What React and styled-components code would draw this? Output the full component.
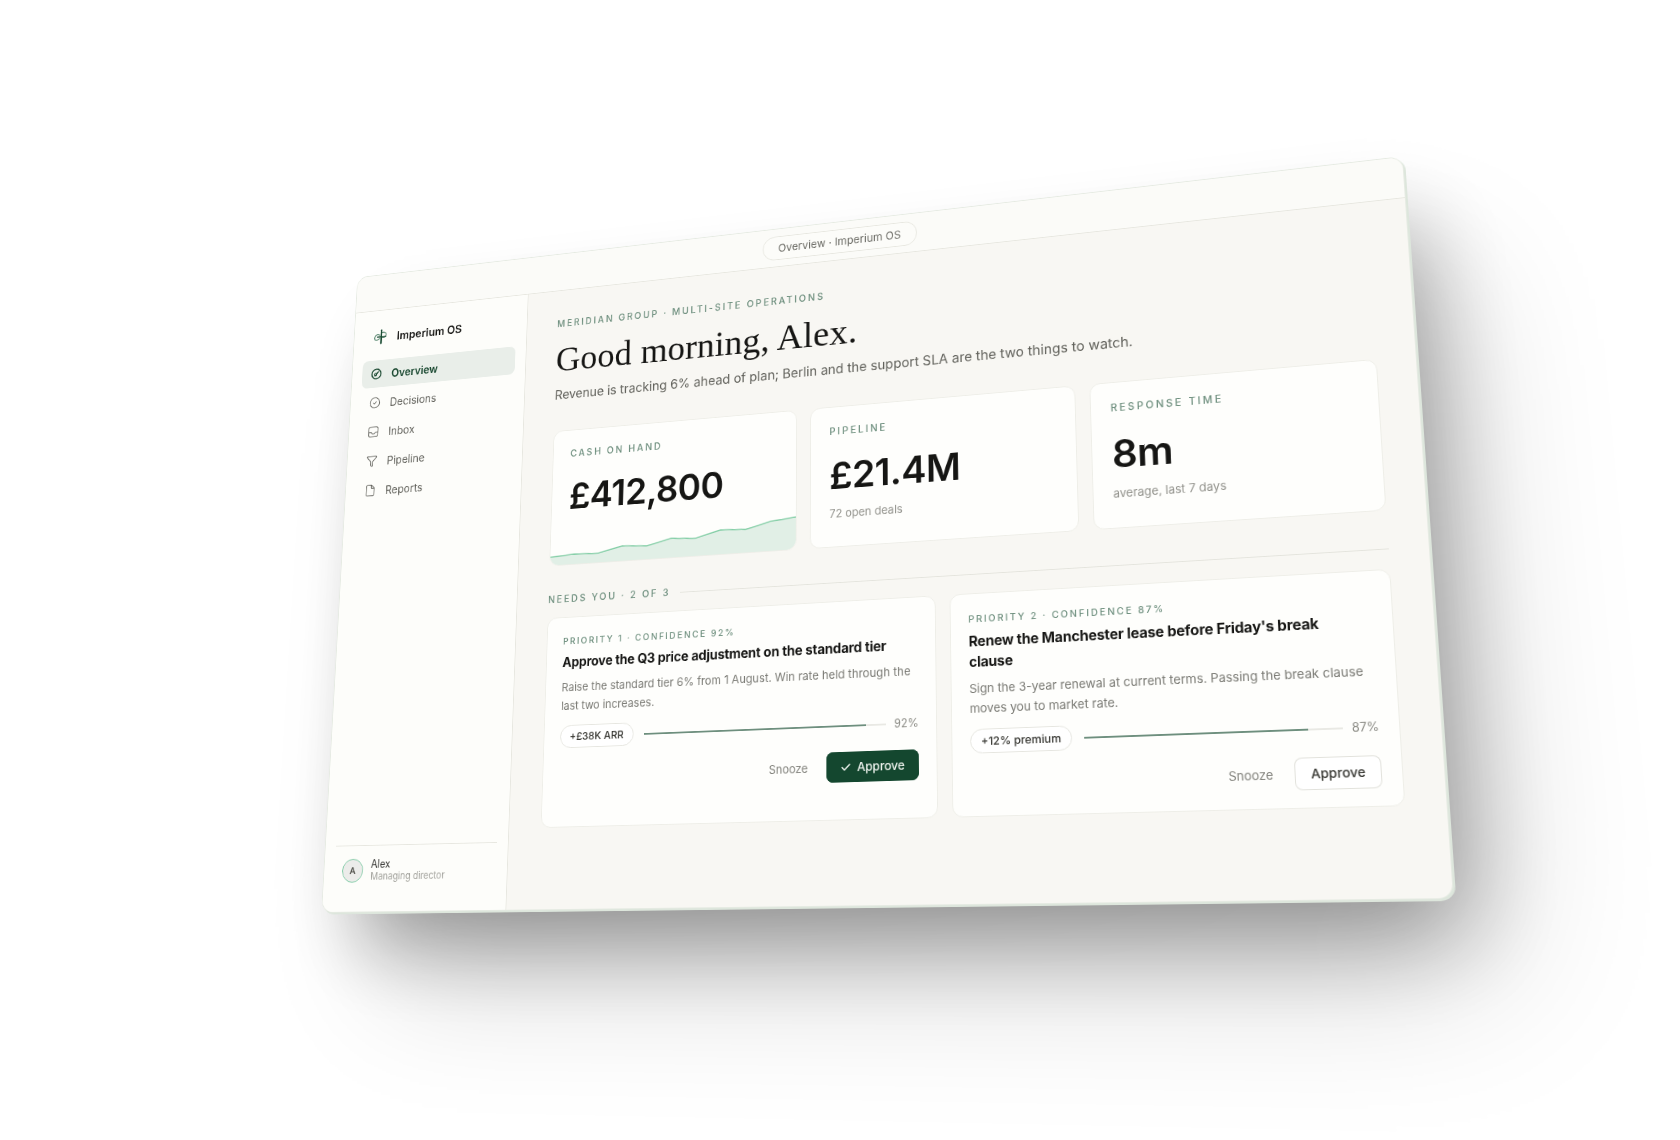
import React from "react";
import styled, { createGlobalStyle } from "styled-components";
import { CircleCheck, Filter, File, Check } from "lucide-react";

const W = 1280, H = 800;
const corners = [[358, 278], [1402, 157], [1453, 898], [322, 912]];

function solve(A, b) {
  const n = b.length;
  const M = A.map((r, i) => [...r, b[i]]);
  for (let c = 0; c < n; c++) {
    let p = c;
    for (let r = c + 1; r < n; r++) if (Math.abs(M[r][c]) > Math.abs(M[p][c])) p = r;
    [M[c], M[p]] = [M[p], M[c]];
    for (let r = 0; r < n; r++) {
      if (r === c) continue;
      const f = M[r][c] / M[c][c];
      for (let k = c; k <= n; k++) M[r][k] -= f * M[c][k];
    }
  }
  return M.map((r, i) => r[n] / r[i]);
}
function homography(w, h, pts) {
  const src = [[0, 0], [w, 0], [w, h], [0, h]];
  const A = [], b = [];
  src.forEach(([x, y], i) => {
    const [u, v] = pts[i];
    A.push([x, y, 1, 0, 0, 0, -x * u, -y * u]); b.push(u);
    A.push([0, 0, 0, x, y, 1, -x * v, -y * v]); b.push(v);
  });
  const [a, bb, c, d, e, f, g, hh] = solve(A, b);
  return `matrix3d(${a},${d},0,${g},${bb},${e},0,${hh},0,0,1,0,${c},${f},0,1)`;
}
const tilt = homography(W, H, corners);

const Global = createGlobalStyle`
  html, body { margin: 0; padding: 0; background: #fff; }
  body { font-family: Inter, "Liberation Sans", sans-serif; }
`;
const Stage = styled.div`
  width: 1680px; height: 1140px; overflow: hidden; background: #fff;
`;
const Window = styled.div`
  width: ${W}px; height: ${H}px; box-sizing: border-box;
  transform-origin: 0 0; transform: ${tilt}; will-change: transform;
  background: #f8f7f3; border-radius: 14px;
  display: flex; flex-direction: column;
  box-shadow: 0 0 0 1px #e6ebe3, 2px 2px 0 1px #dde6dc,
    30px 56px 90px -20px rgba(0,0,0,.33), 60px 100px 150px -30px rgba(0,0,0,.2);
`;
const TitleBar = styled.div`
  height: 48px; flex: none; display: flex; align-items: center; justify-content: center;
  background: #fbfbf8; border-bottom: 1px solid #e7e7e0; border-radius: 14px 14px 0 0; box-sizing: border-box;
`;
const TitlePill = styled.div`
  font-size: 13px; color: #6a6a64; background: #fcfcf9; border: 1px solid #e7e7e0; border-radius: 999px;
  padding: 6px 18px; letter-spacing: .1px;
`;
const Body = styled.div`flex: 1; display: flex; min-height: 0;`;
const Sidebar = styled.aside`
  width: 240px; flex: none; box-sizing: border-box; background: #fdfdfa; border-right: 1px solid #e7e7e0;
  border-bottom-left-radius: 14px; padding: 23px 14px 32px; display: flex; flex-direction: column;
`;
const Brand = styled.div`
  display: flex; align-items: center; gap: 10px; padding: 0 12px; font-size: 14.5px; font-weight: 600; color: #141412; margin-bottom: 19px;
`;
const Nav = styled.nav`display: flex; flex-direction: column; gap: 2px;`;
const NavItem = styled.div`
  display: flex; align-items: center; gap: 13px; height: 36px; padding: 0 12px; border-radius: 8px; font-size: 14px;
  font-weight: ${p => (p.$active ? 600 : 400)};
  color: ${p => (p.$active ? "#18472f" : "#62625c")};
  background: ${p => (p.$active ? "#e9eee9" : "transparent")};
`;
const User = styled.div`
  margin-top: auto; border-top: 1px solid #e7e7e0; display: flex; align-items: center; gap: 10px; padding: 14px 10px 2px;
`;
const Avatar = styled.div`
  width: 28px; height: 28px; border-radius: 50%; background: #ececea; border: 1.5px solid #7cc9a3; color: #55554f;
  font-size: 11px; font-weight: 600; display: flex; align-items: center; justify-content: center; box-sizing: border-box;
`;
const UserName = styled.div`font-size: 12.5px; color: #2a2a27; line-height: 15px;`;
const UserRole = styled.div`font-size: 11.3px; color: #a2a29c; line-height: 14px;`;
const Main = styled.main`flex: 1; padding: 36px 40px 0 40px; min-width: 0;`;
const Eyebrow = styled.div`
  font-size: 11.5px; font-weight: 500; letter-spacing: 2.4px; text-transform: uppercase; color: #6e8f7e; 
`;
const Greeting = styled.h1`
  font-family: "Liberation Serif", serif; font-weight: 400; font-size: 44.5px; line-height: 54px; margin: 12px 0 8px; color: #161614; letter-spacing: .2px;
`;
const Lede = styled.p`margin: 0 0 34px; font-size: 15.75px; line-height: 22px; color: #62625c;`;
const Stats = styled.div`display: grid; grid-template-columns: repeat(3, 1fr); gap: 16px;`;
const StatCard = styled.div`
  position: relative; overflow: hidden; height: 168px; box-sizing: border-box; background: #fefefc; border: 1px solid #eeeee8; border-radius: 12px; padding: 22px 22px;
`;
const StatLabel = styled(Eyebrow)``;
const StatValue = styled.div`font-size: 44px; line-height: 52px; font-weight: 600; color: #161614; margin-top: 20px; letter-spacing: -.6px;`;
const StatNote = styled.div`font-size: 13px; color: #92928c; margin-top: 11px;`;
const Spark = styled.svg`position: absolute; left: 0; right: 0; bottom: 0; width: 100%; height: 44px; display: block;`;
const SectionHead = styled.div`display: flex; align-items: center; gap: 12px; margin: 34px 0 15px;`;
const SectionLine = styled.div`flex: 1; height: 1px; background: #e4e4dd;`;
const Cards = styled.div`display: grid; grid-template-columns: 1fr 1fr; gap: 16px;`;
const Card = styled.div`background: #fefefc; border: 1px solid #eeeee8; border-radius: 12px; padding: 22px 20px 24px; height: 248px; box-sizing: border-box;`;
const CardEyebrow = styled.div`font-size: 10.5px; font-weight: 500; letter-spacing: 2.05px; text-transform: uppercase; color: #6e8f7e;`;
const CardTitle = styled.h3`margin: 7px 0 8px; max-width: 415px; font-size: 15.6px; line-height: 23px; font-weight: 650; color: #161614; letter-spacing: -.2px;`;
const CardText = styled.p`margin: 0; font-size: 13.25px; line-height: 21.5px; color: #7a7a74;`;
const MeterRow = styled.div`display: flex; align-items: center; gap: 13px; margin-top: 12px;`;
const Tag = styled.span`font-size: 12.3px; font-weight: 500; color: #34342f; border: 1px solid #e6e6e0; border-radius: 999px; padding: 5px 11px; background: #fff;`;
const Track = styled.div`flex: 1; height: 2px; background: #e9e9e4; margin-right: -4px;`;
const Fill = styled.div`height: 100%; background: #6e8f7e;`;
const Pct = styled.span`font-size: 12.5px; color: #8a8a84;`;
const Actions = styled.div`display: flex; justify-content: flex-end; align-items: center; gap: 8px; margin-top: 16px;`;
const Snooze = styled.button`all: unset; font-size: 13px; color: #82827c; padding: 9px 14px; font-family: inherit;`;
const Approve = styled.button`
  all: unset; display: inline-flex; align-items: center; gap: 6px; font-size: 13.5px; font-weight: 500; padding: 9px 16px; border-radius: 8px; font-family: inherit;
  color: ${p => (p.$primary ? "#eef3ee" : "#34342f")};
  background: ${p => (p.$primary ? "#14472f" : "#fff")};
  box-shadow: inset 0 0 0 1px ${p => (p.$primary ? "#14472f" : "#e2e2dc")};
`;

const Logo = () => (
  <svg width="24" height="24" viewBox="0 0 22 22" fill="none" strokeLinecap="round">
    <path d="M9 9c-2-2-6-1-6.5 2.5C2 15 6 16 9 13" stroke="#5f8c76" strokeWidth="1.2" />
    <path d="M12 6c3-1 6 1 5 4s-3 2.5-5 2" stroke="#5f8c76" strokeWidth="1.2" />
    <path d="M11 3v16" stroke="#1c4d35" strokeWidth="2" />
    <path d="M6 11h11" stroke="#1c4d35" strokeWidth="1.4" />
  </svg>
);
const OverviewIcon = () => (
  <svg width="16" height="16" viewBox="0 0 24 24" fill="none" stroke="currentColor" strokeWidth="2.4" strokeLinecap="round">
    <circle cx="12" cy="12" r="9.5" />
    <path d="M9.5 15.5 16 8" />
    <circle cx="10.5" cy="13" r="2.5" strokeWidth="1.6" />
  </svg>
);
const InboxIcon = () => (
  <svg width="16" height="16" viewBox="0 0 24 24" fill="none" stroke="currentColor" strokeWidth="1.5" strokeLinejoin="round">
    <rect x="2.5" y="2.5" width="19" height="19" rx="3" />
    <path d="M2.5 13h5.5l2 3h4l2-3h5.5" />
  </svg>
);
const spark = "0 34 32 32 64 33 96 26 128 28 160 21 192 23 224 15 256 16.5 288 9 320 6";
const pts = spark.split(" ").reduce((acc, n, i, a) => (i % 2 ? acc : [...acc, `${n} ${a[i + 1]}`]), []);
const sparkLine = "M" + pts.join(" L");

export default function App() {
  return (
    <Stage>
      <Global />
      <Window>
        <TitleBar><TitlePill>Overview · Imperium OS</TitlePill></TitleBar>
        <Body>
          <Sidebar>
            <Brand><Logo />Imperium OS</Brand>
            <Nav>
              <NavItem $active><OverviewIcon />Overview</NavItem>
              <NavItem><CircleCheck size={16} strokeWidth={1.5} />Decisions</NavItem>
              <NavItem><InboxIcon />Inbox</NavItem>
              <NavItem><Filter size={16} strokeWidth={1.5} />Pipeline</NavItem>
              <NavItem><File size={16} strokeWidth={1.5} />Reports</NavItem>
            </Nav>
            <User>
              <Avatar>A</Avatar>
              <div><UserName>Alex</UserName><UserRole>Managing director</UserRole></div>
            </User>
          </Sidebar>
          <Main>
            <Eyebrow>Meridian Group · Multi-site operations</Eyebrow>
            <Greeting>Good morning, Alex.</Greeting>
            <Lede>Revenue is tracking 6% ahead of plan; Berlin and the support SLA are the two things to watch.</Lede>
            <Stats>
              <StatCard>
                <StatLabel>Cash on hand</StatLabel>
                <StatValue>£412,800</StatValue>
                <Spark viewBox="0 0 320 44" preserveAspectRatio="none">
                  <path d={`${sparkLine} V44 H0 Z`} fill="#e1efe6" />
                  <path d={sparkLine} fill="none" stroke="#86cfa8" strokeWidth="1.5" />
                </Spark>
              </StatCard>
              <StatCard>
                <StatLabel>Pipeline</StatLabel>
                <StatValue>£21.4M</StatValue>
                <StatNote>72 open deals</StatNote>
              </StatCard>
              <StatCard>
                <StatLabel>Response time</StatLabel>
                <StatValue>8m</StatValue>
                <StatNote>average, last 7 days</StatNote>
              </StatCard>
            </Stats>
            <SectionHead><Eyebrow>Needs you · 2 of 3</Eyebrow><SectionLine /></SectionHead>
            <Cards>
              <Card>
                <CardEyebrow>Priority 1 · Confidence 92%</CardEyebrow>
                <CardTitle>Approve the Q3 price adjustment on the standard tier</CardTitle>
                <CardText>Raise the standard tier 6% from 1 August. Win rate held through the last two increases.</CardText>
                <MeterRow>
                  <Tag>+£38K ARR</Tag>
                  <Track><Fill style={{ width: "92%" }} /></Track>
                  <Pct>92%</Pct>
                </MeterRow>
                <Actions>
                  <Snooze>Snooze</Snooze>
                  <Approve $primary><Check size={13} strokeWidth={3} />Approve</Approve>
                </Actions>
              </Card>
              <Card>
                <CardEyebrow>Priority 2 · Confidence 87%</CardEyebrow>
                <CardTitle>Renew the Manchester lease before Friday's break clause</CardTitle>
                <CardText>Sign the 3-year renewal at current terms. Passing the break clause moves you to market rate.</CardText>
                <MeterRow>
                  <Tag>+12% premium</Tag>
                  <Track><Fill style={{ width: "87%" }} /></Track>
                  <Pct>87%</Pct>
                </MeterRow>
                <Actions>
                  <Snooze>Snooze</Snooze>
                  <Approve>Approve</Approve>
                </Actions>
              </Card>
            </Cards>
          </Main>
        </Body>
      </Window>
    </Stage>
  );
}
